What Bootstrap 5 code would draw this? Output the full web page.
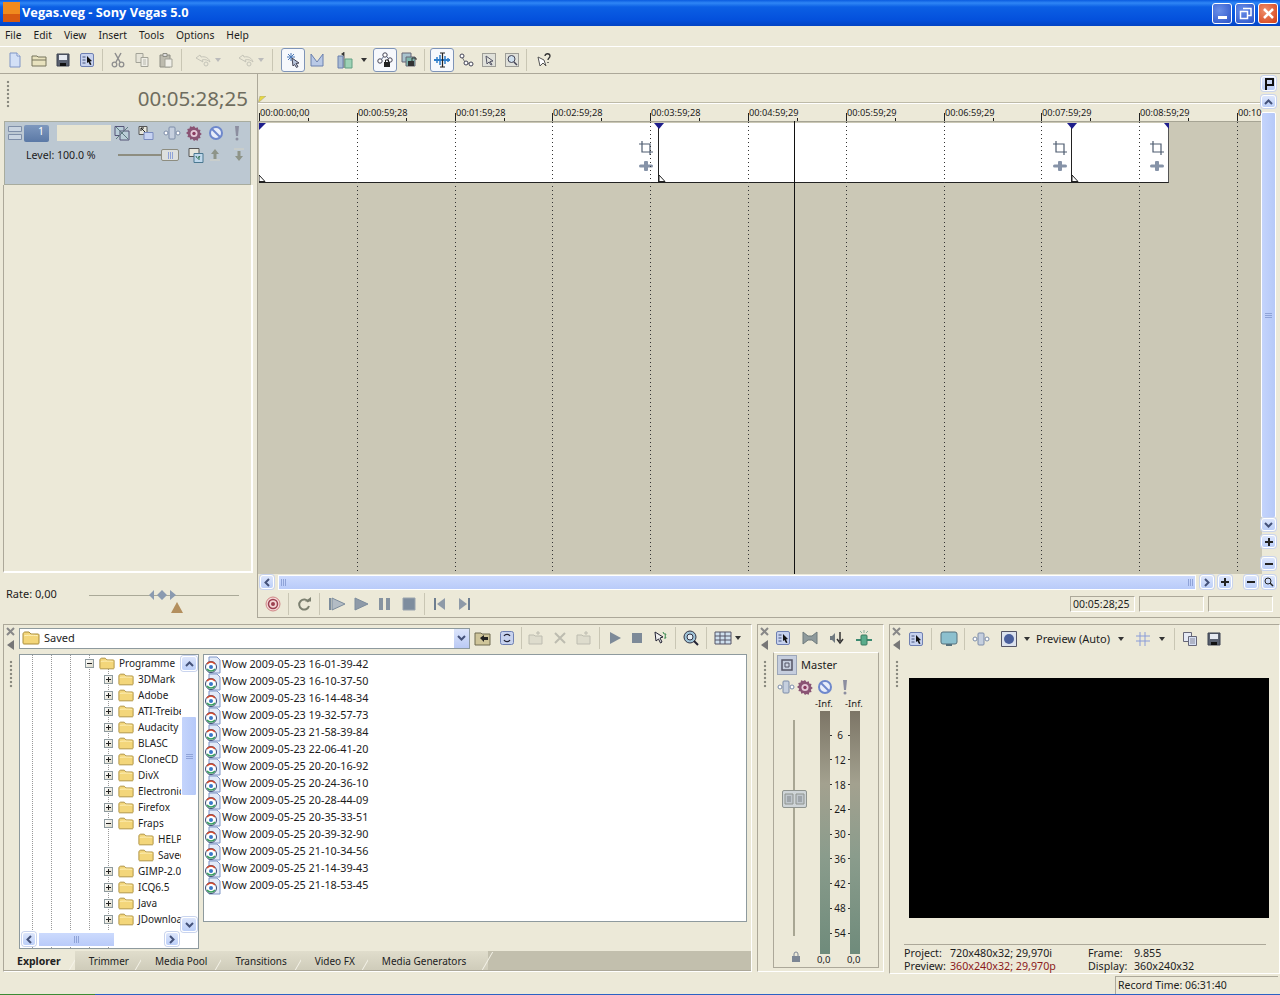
<!DOCTYPE html>
<html lang="en">
<head>
<meta charset="UTF-8">
<title>Vegas.veg - Sony Vegas 5.0</title>
<link href="https://cdn.jsdelivr.net/npm/bootstrap@5.3.0/dist/css/bootstrap.min.css" rel="stylesheet">
<style>
    html, body { margin: 0; width: 1280px; height: 995px; overflow: hidden; }
    body { background: #ECE9D8; color: #1c1c1c; font: 10.5px/1.2 "Noto Sans", "Liberation Sans", sans-serif; }
    svg { display: block; flex: none; }
    .ico { width: 16px; height: 16px; }
    .titlebar { height: 26px; padding: 0 2px 2px 3px; color: #fff; font: bold 12.8px "Open Sans", sans-serif;
        background: linear-gradient(#0A5BE0 0, #2F86F5 3px, #0B5FE4 7px, #0450DC 20px, #0344C4 26px); }
    .app-logo { margin-right: 2px; }
    .win-btn { width: 20px; height: 21px; border: 1px solid #fff; border-radius: 3px; background: radial-gradient(circle at 35% 35%, #6A8FE8, #2A53C8); }
    .win-close { background: radial-gradient(circle at 35% 35%, #F0906C, #D33C14); }
    .win-group { gap: 3px; margin-top: 2px; }
    .menubar { height: 21px; padding: 0 0 2px 5px; font-size: 10.3px; border-bottom: 1px solid #fff; }
    .menubar span { margin-right: 12px; }
    .toolbar { height: 27px; padding-left: 3px; border-bottom: 1px solid #ACA899; }
    .cell { width: 24px; height: 24px; display: flex; align-items: center; justify-content: center; flex: none; }
    .cell-on { background: #F6F8FC; border: 1px solid #7E94B8; border-radius: 3px; }
    .cell-22 { width: 22px; }
    .cell-23 { width: 23px; }
    .sep { width: 1px; height: 22px; background: #C9C6B4; margin: 0 3px; flex: none; }
    .drop { width: 0; height: 0; border: 3px solid transparent; border-top: 4px solid #333; border-bottom: 0; flex: none; }
    .drop-off { border-top-color: #bbb; }

    .main-area { height: 544px; }
    .left-col { width: 257px; flex: none; }
    .clock-row { height: 47px; padding: 6px 9px 0 6px; }
    .big-time { font: 20.5px "Noto Sans", sans-serif; color: #6F6D5F; margin-top: 4px; }
    .grip { width: 4px; height: 28px; background: radial-gradient(circle, #8b8b80 1.3px, transparent 1.6px) 0 0 / 4px 4px repeat-y; flex: none; }
    .track-head { margin: 0 6px 0 4px; height: 64px; background: #BCC8D2; border: 1px solid #A8AC9E; padding: 1px 0 0 3px; }
    .track-head .cell { height: 20px; }
    .level-row { margin-top: 2px; }
    .track-num { width: 25px; height: 17px; background: linear-gradient(#7E98BE, #5B79A6); border-radius: 2px; color: #fff; text-align: right; padding-right: 5px; margin: 0 8px 0 2px; }
    .track-name { width: 54px; height: 16px; background: #E8E5D2; margin-right: -1px; }
    .level-text { font-size: 10.6px; white-space: nowrap; flex: none; width: 74px; margin-left: 18px; }
    .level-line { width: 43px; height: 2px; background: #8d8d80; margin-left: 18px; flex: none; }
    .level-thumb { width: 18px; height: 12px; background: #DDE0DE; border: 1px solid #8d8d80; border-radius: 2px; flex: none; display: flex; align-items: center; justify-content: center; }
    .left-empty { height: 388px; border-right: 2px solid #fff; border-bottom: 2px solid #fff; border-left: 1px solid #ACA899; margin: 0 4px 0 3px; }
    .rate-row { height: 44px; padding-left: 6px; }
    .rate-slider { position: relative; width: 150px; height: 1px; background: #AAA998; margin-left: 32px; margin-top: 3px; }

    .time-canvas { position: relative; height: 500px; flex: none; border-left: 1px solid #ACA899; }
    .ruler { position: absolute; left: 0; right: 18px; top: 0; height: 48px; border-bottom: 1px solid #A6A494; overflow: hidden; }
    .ruler-in { position: absolute; left: 0; right: 0; top: 29px; height: 19px; border-top: 1px solid #fff; box-shadow: 0 -1px 0 #BDBAA8; }
    .tick { position: absolute; top: 34px; height: 13px; padding-left: 1px; font-size: 9.2px; white-space: nowrap; line-height: 10px; }
    .tick::before { content: ""; position: absolute; left: 0; bottom: 0; height: 8px; border-left: 1px solid #222; }
    .mini-tick { position: absolute; top: 44px; height: 3px; border-left: 1px solid #222; }
    .track-bed { position: absolute; left: 0; right: 18px; top: 48px; bottom: 0; background: #CBC8B6; }
    .clip { position: absolute; left: 1px; top: 1px; width: 910px; height: 60px; background: #fff; border-bottom: 1px solid #222; border-right: 1px solid #555; }
    .clip-cut { position: absolute; top: 0; bottom: 0; border-left: 1px solid #222; }
    .grid-line { position: absolute; top: 0; bottom: 0; width: 1px; background: repeating-linear-gradient(#333 0 1px, transparent 1px 4px); }
    .playhead { position: absolute; left: 536px; top: -1px; bottom: 0; border-left: 1px solid #111; }
    .on-clip { position: absolute; }
    .v-bar { position: absolute; right: 4px; top: 2px; bottom: 0; width: 15px; }
    .scroll-btn { background: linear-gradient(#DCE5FB, #BCCFF8); border: 1px solid #fff; border-radius: 3px; box-shadow: 0 0 0 1px #C9D4EE; display: flex; align-items: center; justify-content: center; flex: none; color: #44527A; }
    .v-thumb { background: linear-gradient(90deg, #C4D4FC, #B6C9F8); border: 1px solid #fff; border-radius: 2px; flex: 1; display: flex; align-items: center; justify-content: center; }
    .h-bar { height: 16px; padding: 0 4px 0 2px; border-left: 1px solid #ACA899; }
    .h-thumb { background: linear-gradient(#CCDAFD, #B9CBF9); border: 1px solid #fff; flex: 1; height: 15px; display: flex; align-items: center; justify-content: space-between; padding: 0 2px; }
    .grip-h { width: 5px; height: 7px; background: repeating-linear-gradient(90deg, #8FA3D8 0 1px, transparent 1px 2px); }
    .grip-v { width: 7px; height: 5px; background: repeating-linear-gradient(#8FA3D8 0 1px, transparent 1px 2px); }
    .pad-btn { width: 14px; height: 14px; }
    .transport { height: 28px; border-left: 1px solid #ACA899; border-bottom: 1px solid #ACA899; padding-left: 3px; }
    .tc-box { width: 65px; height: 16px; border: 1px solid #ACA899; border-bottom-color: #fff; border-right-color: #fff; margin-left: 4px; padding-left: 2px; line-height: 14px; }

    .bottom-area { height: 350px; margin-top: 6px; }
    .panel-box { border: 1px solid #ACA899; border-right-color: #fff; border-bottom-color: #fff; }
    .explorer { margin-left: 3px; width: 749px; height: 348px; position: relative; }
    .mixer { margin-left: 5px; width: 127px; height: 348px; }
    .preview { margin-left: 5px; width: 391px; height: 350px; }
    .side-rail { width: 15px; flex: none; padding: 2px 2px 0 0; align-items: center; }
    .combo { width: 451px; height: 21px; background: #fff; border: 1px solid #8E9A9E; padding-left: 2px; }
    .combo-drop { width: 15px; height: 19px; background: linear-gradient(#DCE5FB, #BAC9F4); }
    .tree { position: relative; width: 180px; height: 295px; background: #fff; border: 1px solid #8E9A9E; overflow: hidden; margin-top: 4px; }
    .tree-list { width: 161px; height: 277px; overflow: hidden; position: relative; }
    .tree-row { height: 16px; white-space: nowrap; display: flex; align-items: center; position: relative; font-size: 10px; }
    .expander { width: 9px; height: 9px; border: 1px solid #8E9A9E; background: linear-gradient(135deg, #fff, #DCD9C8); position: relative; flex: none; margin-right: 5px; }
    .expander::before { content: ""; position: absolute; left: 1px; right: 1px; top: 3px; height: 1px; background: #222; }
    .expander.plus::after { content: ""; position: absolute; top: 1px; bottom: 1px; left: 3px; width: 1px; background: #222; }
    .guide { position: absolute; top: 0; bottom: 0; width: 1px; background: repeating-linear-gradient(#999 0 1px, transparent 1px 2px); }
    .file-list { width: 544px; height: 268px; background: #fff; border: 1px solid #8E9A9E; margin-top: 4px; padding-top: 1px; }
    .file-row { height: 17px; display: flex; align-items: center; font-size: 10.8px; }
    .tab-band { position: absolute; left: 0; right: 0; bottom: 0; height: 20px; background: #C2BFAD; border-bottom: 1px solid #ACA899; }
    .app-tab { position: relative; height: 19px; padding: 0 14px; line-height: 20px; color: #222; font-size: 10px; background: linear-gradient(#E0DDCC, #CFCCBA); }
    .app-tab::after { content: ""; position: absolute; top: 1px; bottom: 0; right: 0; border-right: 1px solid #F6F4EA; transform: skewX(-30deg); }
    .app-tab.active { background: #ECE9D8; font-weight: 700; font-size: 10.5px; padding: 0 14px 0 13px; }
    .app-tab:nth-child(2) { padding-right: 12px; }
    .app-tab:nth-child(5) { padding-right: 13px; }
    .app-tab.tail { padding-right: 22px; }
    .mix-box { width: 106px; height: 316px; border: 1px solid #ACA899; border-top-color: #fff; position: relative; margin-top: 1px; padding: 2px 0 0 3px; }
    .master-btn { width: 20px; height: 20px; background: #C6CEDE; border: 1px solid #9CA6B8; display: flex; align-items: center; justify-content: center; }
    .meter { width: 10px; height: 243px; background: linear-gradient(#7C7566, #A3A18F 30%, #8A9C8C 60%, #6F8B7B); }
    .fader-line { position: absolute; left: 19px; top: 67px; width: 2px; height: 216px; background: #A8A693; }
    .fader-thumb { position: absolute; left: 8px; top: 137px; width: 25px; height: 18px; background: #CFD5D8; border: 1px solid #8F948F; border-radius: 2px; }
    .meter-wrap { position: absolute; left: 46px; top: 58px; width: 40px; height: 243px; }
    .scale-col { position: absolute; left: 10px; right: 10px; top: 18px; height: 210px; font-size: 10px; display: flex; flex-direction: column; justify-content: space-between; }
    .scale-col span { display: flex; align-items: center; justify-content: space-between; height: 12px; }
    .scale-col span::before, .scale-col span::after { content: ""; width: 2px; height: 1px; background: #333; }
    .mini-label { position: absolute; font-size: 9.5px; white-space: nowrap; }
    .video { width: 360px; height: 240px; background: #000; margin: 25px 0 0 4px; }
    .preview-info { margin: 26px 0 0 -1px; width: 362px; border-top: 1px solid #ACA899; padding-top: 2px; line-height: 13px; font-size: 10.7px; }
    .info-k { display: inline-block; width: 46px; }
    .status-row { height: 20px; }
    .record-box { width: 163px; height: 18px; margin: 2px 2px 0 auto; border: 1px solid #ACA899; border-right: 0; border-bottom: 0; padding: 2px 0 0 2px; font-size: 10.5px; }
    .os-edge { height: 1px; background: linear-gradient(90deg, #3B8A34 95px, #2B62C4 95px); }
</style>
</head>
<body>
<svg width="0" height="0" class="position-absolute">
    <symbol id="i-new" viewBox="0 0 16 16"><path d="M3 1h7l3 3v11H3z" fill="#D3E0F6" stroke="#7F95C6"/><path d="M10 1v3h3" fill="#fff" stroke="#7F95C6"/></symbol>
    <symbol id="i-open" viewBox="0 0 16 16"><path d="M1 4h5l1 1h8v9H1z" fill="#E8E2BE" stroke="#77745C"/><path d="M1 8h14" stroke="#77745C"/></symbol>
    <symbol id="i-save" viewBox="0 0 16 16"><path d="M2 2h12v12H2z" fill="#59606F" stroke="#3C4350"/><path d="M4 3h8v5H4z" fill="#E6EAF1"/><path d="M5 11h6v3H5z" fill="#111"/></symbol>
    <symbol id="i-props" viewBox="0 0 16 16"><rect x="1.500" y="1.500" width="13" height="13" rx="1.500" fill="#C7D2EE" stroke="#6F80B2"/><path d="M3.500 5h3M3.500 8h3M3.500 11h3" stroke="#45527A"/><path d="M8 4l5 5-2 .5 1.500 3-1.500.5-1.500-3L8 11z" fill="#111"/></symbol>
    <symbol id="i-cut" viewBox="0 0 16 16"><path d="M5 1l5 9M11 1L6 10" stroke="#8E8E8E" stroke-width="1.500" fill="none"/><circle cx="4.500" cy="12.500" r="2.300" fill="none" stroke="#8E8E8E" stroke-width="1.300"/><circle cx="11.500" cy="12.500" r="2.300" fill="none" stroke="#8E8E8E" stroke-width="1.300"/></symbol>
    <symbol id="i-copy" viewBox="0 0 16 16"><path d="M2 1.500h7v9H2z" fill="#E6E4D8" stroke="#A3A398"/><path d="M7 5.500h7v9H7z" fill="#EFEEE6" stroke="#A3A398"/><path d="M9 8h3M9 10h3M9 12h3" stroke="#B8B8AE"/></symbol>
    <symbol id="i-paste" viewBox="0 0 16 16"><path d="M2 3h10v12H2z" fill="#BDBBAE" stroke="#8E8E84"/><path d="M5 1.500h4v3H5z" fill="#DDD" stroke="#8E8E84"/><path d="M7 7h7v8H7z" fill="#F0EFE8" stroke="#A3A398"/></symbol>
    <symbol id="i-undo" viewBox="0 0 18 16"><path d="M2 6l4-3 1 2c4-1 8 1 9 5-2-2-5-3-8-2l1 2z" fill="none" stroke="#C5C4B8"/><circle cx="12" cy="12" r="2" fill="none" stroke="#C5C4B8"/></symbol>
    <symbol id="i-select" viewBox="0 0 16 16"><path d="M6 1v8M2 5h8M3 2l6 6M9 2L3 8" stroke="#4A78B8"/><path d="M7 6l7 5-3 .5 2 3-1.500 1-2-3L8 14z" fill="#B8C4DC" stroke="#445"/></symbol>
    <symbol id="i-env" viewBox="0 0 16 16"><path d="M2 2v12h12V2L8 10z" fill="#B9C9E6" stroke="#6A80AE"/></symbol>
    <symbol id="i-track" viewBox="0 0 18 18"><path d="M8 1v16" stroke="#555"/><path d="M2 5h5v12H2z" fill="#A8BBD4" stroke="#6A80AE"/><path d="M9 8h7v9H9z" fill="#9ED2B6" stroke="#62A083"/><path d="M5 3l3-2v4z" fill="#333"/></symbol>
    <symbol id="i-nodes" viewBox="0 0 18 18"><path d="M4 10l5-6 5 5" stroke="#5A6A8A" fill="none"/><circle cx="4" cy="10" r="2.200" fill="#fff" stroke="#445"/><circle cx="9" cy="4" r="2.200" fill="#fff" stroke="#445"/><circle cx="14" cy="9" r="2.200" fill="#fff" stroke="#445"/><path d="M8 11h6v5H8z" fill="#222"/><path d="M9.500 11V9h3v2" fill="none" stroke="#222"/></symbol>
    <symbol id="i-unlock" viewBox="0 0 18 18"><path d="M2 2h9v9H2z" fill="#A9C4CE" stroke="#667"/><path d="M6 6h9v9H6z" fill="#7FB6AC" stroke="#667"/><path d="M8 10h6v5H8z" fill="#333"/><path d="M12 10V7h4v2" stroke="#333" fill="none"/></symbol>
    <symbol id="i-ripple" viewBox="0 0 18 18"><path d="M1 9h16" stroke="#2D7CC9" stroke-width="2"/><path d="M4 6v6M7 4v10M12 5v8M15 7v4" stroke="#2D7CC9" stroke-width="1.500"/><path d="M9.500 2v14M7 2h5M7 16h5" stroke="#222" stroke-width="1.200"/></symbol>
    <symbol id="i-curve" viewBox="0 0 16 16"><path d="M4 5l4 7 4-1" stroke="#777" fill="none"/><circle cx="4" cy="4" r="2" fill="#fff" stroke="#445"/><circle cx="8" cy="11" r="2" fill="#fff" stroke="#445"/><circle cx="13" cy="12" r="2" fill="#fff" stroke="#445"/></symbol>
    <symbol id="i-selbox" viewBox="0 0 16 16"><path d="M1.500 1.500h13v13h-13z" fill="#E0E1DA" stroke="#555" stroke-dasharray="1 1"/><path d="M5 4l7 5-3 .5 2 3-1 .5-2-3-2 2z" fill="none" stroke="#556"/></symbol>
    <symbol id="i-zoombox" viewBox="0 0 16 16"><path d="M1.500 1.500h13v13h-13z" fill="#E0E1DA" stroke="#555" stroke-dasharray="1 1"/><circle cx="7.500" cy="7" r="3.500" fill="#CFE0EE" stroke="#445"/><path d="M10 10l3 3" stroke="#445" stroke-width="1.500"/></symbol>
    <symbol id="i-help" viewBox="0 0 16 16"><path d="M2 5l6 3 2 6-3-3-3 3z" fill="#fff" stroke="#555"/><path d="M9 4c0-3 5-3 5 0 0 2-2 2-2 4M12 10v1" stroke="#333" fill="none" stroke-width="1.300"/></symbol>
    <symbol id="i-crop" viewBox="0 0 14 14"><path d="M3 0v11h11M0 3h11v11" fill="none" stroke="#4E5C70" stroke-width="1.200"/></symbol>
    <symbol id="i-pan" viewBox="0 0 14 14"><rect x="5" y="2" width="4" height="10" rx="1" fill="#8693A8"/><rect x="0" y="5.500" width="14" height="3" rx="1.500" fill="#8693A8"/></symbol>
    <symbol id="i-chip" viewBox="0 0 18 16"><path d="M1 8h4M13 8h4" stroke="#7C8CA8" stroke-width="2"/><rect x="6" y="2" width="6" height="12" rx="1" fill="#C5CFDE" stroke="#7C8CA8"/><circle cx="3" cy="8" r="2" fill="#fff" stroke="#7C8CA8"/><circle cx="15" cy="8" r="2" fill="#fff" stroke="#7C8CA8"/></symbol>
    <symbol id="i-fx" viewBox="0 0 16 16"><path d="M8 1l1.500 2 2.300-.8.4 2.400 2.400.4-.8 2.300 2 1.700-2 1.700.8 2.300-2.400.4-.4 2.400-2.300-.8L8 16l-1.500-2-2.300.8-.4-2.400-2.400-.4.8-2.300L0 8l2-1.700-.8-2.300 2.400-.4.4-2.400 2.300.8z" fill="#8A5474"/><circle cx="8" cy="8.500" r="3.500" fill="#E5C9D8"/><circle cx="8" cy="8.500" r="1.700" fill="#8A3A60"/></symbol>
    <symbol id="i-mute" viewBox="0 0 16 16"><circle cx="8" cy="8" r="6" fill="#E8EDFA" stroke="#6E88CC" stroke-width="2"/><path d="M4 4l8 8" stroke="#6E88CC" stroke-width="2"/></symbol>
    <symbol id="i-solo" viewBox="0 0 16 16"><path d="M6 1h4l-1 10H7z" fill="#8C8EA0"/><circle cx="8" cy="14" r="1.500" fill="#8C8EA0"/></symbol>
    <symbol id="i-comp" viewBox="0 0 16 16"><path d="M1 1.500h10v8H1z" fill="#E6E6DC" stroke="#555"/><path d="M6 6.500h9v9H6z" fill="#BFD8EC" stroke="#4A7890"/><path d="M8 9c1 3 2 3 4 0M11 9v4" stroke="#2E7050" fill="none"/></symbol>
    <symbol id="i-compoff" viewBox="0 0 16 16"><path d="M1 1.500h9v9H1z" fill="#B9CDD8" stroke="#557"/><path d="M6 6h9v9H6z" fill="#B9CDD8" stroke="#557"/><path d="M2 2l12 12M14 2L2 14" stroke="#5F7A80"/></symbol>
    <symbol id="i-parent" viewBox="0 0 16 16"><path d="M1 1.500h8v8H1z" fill="#E6E6DC" stroke="#555"/><path d="M6 7.500h9v7H6z" fill="#C7D3F2" stroke="#7A8CC0"/><path d="M3 3l4 4M3 6V3h3" stroke="#222" fill="none"/></symbol>
    <symbol id="i-up" viewBox="0 0 14 14"><path d="M7 1L3 6h2.500v5h3V6H11z" fill="#8E9488"/><path d="M2 12h10" stroke="#D5D3C5"/></symbol>
    <symbol id="i-down" viewBox="0 0 14 14"><path d="M7 13l4-5H8.500V3h-3v5H3z" fill="#8E9488"/><path d="M2 1h10" stroke="#D5D3C5"/></symbol>
    <symbol id="i-flag" viewBox="0 0 14 14"><path d="M3 1h9v8H5v4H3z" fill="#111"/><path d="M5 3h5v4H5z" fill="#C9D6F4"/></symbol>
    <symbol id="i-rec" viewBox="0 0 16 16"><circle cx="8" cy="8" r="7" fill="#F4D6D6" stroke="#D08686"/><circle cx="8" cy="8" r="4.500" fill="none" stroke="#9B4050" stroke-width="1.500"/><circle cx="8" cy="8" r="2" fill="#9B4050"/></symbol>
    <symbol id="i-loop" viewBox="0 0 16 16"><path d="M12.500 6A5 5 0 1 0 13 10" fill="none" stroke="#7C8070" stroke-width="2"/><path d="M9 5.500h6V1z" fill="#7C8070"/></symbol>
    <symbol id="i-playstart" viewBox="0 0 18 16"><path d="M2 2v12" stroke="#7C8C9C" stroke-width="2"/><path d="M4 2l13 6-13 6z" fill="#B3BCC4" stroke="#7C8C9C"/></symbol>
    <symbol id="i-play" viewBox="0 0 16 16"><path d="M2 2l13 6-13 6z" fill="#8E9AA8" stroke="#7C8C9C"/></symbol>
    <symbol id="i-pause" viewBox="0 0 16 16"><path d="M2 2h4v12H2zM9 2h4v12H9z" fill="#8693A0"/></symbol>
    <symbol id="i-stop" viewBox="0 0 16 16"><path d="M2 2h12v12H2z" fill="#7E8D9E" stroke="#9AA4AE"/></symbol>
    <symbol id="i-prev" viewBox="0 0 16 16"><path d="M3 2v12" stroke="#6E7E90" stroke-width="2"/><path d="M13 2L5 8l8 6z" fill="#8E9AA8"/></symbol>
    <symbol id="i-next" viewBox="0 0 16 16"><path d="M13 2v12" stroke="#6E7E90" stroke-width="2"/><path d="M3 2l8 6-8 6z" fill="#8E9AA8"/></symbol>
    <symbol id="i-folder" viewBox="0 0 18 16"><path d="M1 4c0-1 1-2 2-2h4l2 2h7c1 0 1 1 1 1v8c0 1-1 1-1 1H2s-1 0-1-1z" fill="#F3D67A" stroke="#A98C3A"/><path d="M2 6c0-1 14-1 14 0" stroke="#FFF3C0" fill="none"/></symbol>
    <symbol id="i-media" viewBox="0 0 18 18"><path d="M5 1h8l3 3v13H5z" fill="#E2EAF8" stroke="#7F95C6"/><circle cx="7" cy="11" r="5.500" fill="#fff" stroke="#3A4A70"/><path d="M3 8a5 5 0 0 1 8 0" fill="none" stroke="#D04A30" stroke-width="1.500"/><path d="M11 13a5 5 0 0 1-8 0" fill="none" stroke="#3AA060" stroke-width="1.500"/><circle cx="7" cy="11" r="2" fill="#3A78C8"/></symbol>
    <symbol id="i-folderup" viewBox="0 0 18 16"><path d="M1 3h6l1 1h8v11H1z" fill="#CFC59A" stroke="#6F6B50"/><path d="M6 8l4-3v2h4v3h-4v2z" fill="#222"/></symbol>
    <symbol id="i-refresh" viewBox="0 0 16 16"><rect x="1.500" y="1.500" width="13" height="13" rx="2" fill="#C7D2EE" stroke="#6F80B2"/><path d="M11 6a3.500 3.500 0 0 0-6 0M5 10a3.500 3.500 0 0 0 6 0" stroke="#223" fill="none" stroke-width="1.300"/></symbol>
    <symbol id="i-newfold" viewBox="0 0 16 16"><path d="M1 5h5l1 1h7v8H1z" fill="#DEDCCD" stroke="#BDBCB0"/><path d="M10 1v4M8 3h4" stroke="#BDBCB0"/></symbol>
    <symbol id="i-del" viewBox="0 0 16 16"><path d="M3 3l10 10M13 3L3 13" stroke="#BDBCB0" stroke-width="2"/></symbol>
    <symbol id="i-playsm" viewBox="0 0 14 14"><path d="M2 1l11 6-11 6z" fill="#7D8A98"/></symbol>
    <symbol id="i-stopsm" viewBox="0 0 14 14"><path d="M2 2h10v10H2z" fill="#7D8A98"/></symbol>
    <symbol id="i-auto" viewBox="0 0 16 16"><path d="M3 2l8 5-3 1 2 4-1.500 1-2-4L4 11z" fill="#eee" stroke="#223"/><path d="M11 2l1 2 2 0-1 2 1 2h-2" stroke="#3A8A50" fill="none"/></symbol>
    <symbol id="i-globe" viewBox="0 0 18 18"><circle cx="8" cy="8" r="6" fill="#9FC4D8" stroke="#334"/><circle cx="8" cy="8" r="3" fill="#E6F0F6" stroke="#334"/><path d="M12 12l4 4" stroke="#223" stroke-width="2"/></symbol>
    <symbol id="i-views" viewBox="0 0 18 16"><path d="M1 2h16v12H1z" fill="#CFE0EE" stroke="#556"/><path d="M1 6h16M1 10h16M6 2v12M11 2v12" stroke="#556"/></symbol>
    <symbol id="i-narrow" viewBox="0 0 16 16"><path d="M1 2l5 4h4l5-4v12l-5-4H6l-5 4z" fill="#8E9A9C" stroke="#6E7A7C"/></symbol>
    <symbol id="i-spkdown" viewBox="0 0 16 16"><path d="M1 6h2l3-3v10l-3-3H1z" fill="#707A80"/><path d="M11 2v9M8 9l3 4 3-4" stroke="#333" stroke-width="1.500" fill="none"/></symbol>
    <symbol id="i-mixbus" viewBox="0 0 18 18"><path d="M1 11h16" stroke="#3A8A70" stroke-width="2"/><rect x="6" y="6" width="6" height="10" rx="1" fill="#5AAC8C" stroke="#3A7A60"/><path d="M9 1v3M5 2l2 2M13 2l-2 2" stroke="#8AAE9C"/></symbol>
    <symbol id="i-master" viewBox="0 0 12 12"><path d="M1 1h10v10H1z" fill="none" stroke="#556" stroke-width="1.500"/><path d="M4 4h4v4H4z" fill="#CFD6E4" stroke="#556"/></symbol>
    <symbol id="i-lock" viewBox="0 0 12 12"><path d="M2 5h8v6H2z" fill="#7C8694"/><path d="M4 5V3a2 2 0 0 1 4 0v2" fill="none" stroke="#7C8694"/></symbol>
    <symbol id="i-monitor" viewBox="0 0 18 18"><rect x="1" y="2" width="16" height="12" rx="2" fill="#8CC0CE" stroke="#55707C"/><path d="M6 15h6" stroke="#55707C" stroke-width="2"/></symbol>
    <symbol id="i-circ" viewBox="0 0 16 16"><path d="M.5.500h15v15H.5z" fill="#DCE2EE" stroke="#556"/><circle cx="8" cy="8" r="5" fill="#4A5F9C"/></symbol>
    <symbol id="i-grid" viewBox="0 0 16 16"><path d="M1 5h14M1 10h14M5 1v14M10 1v14" stroke="#8A9CD8"/></symbol>
    <symbol id="i-dup" viewBox="0 0 16 16"><path d="M1.500 1.500h8v9h-8z" fill="#E6EAF4" stroke="#667"/><path d="M6.500 5.500h8v9h-8z" fill="#D6E0F4" stroke="#667"/><path d="M8 8h5M8 10h5M8 12h5" stroke="#889"/></symbol>
</svg>

<header class="titlebar d-flex align-items-center">
    <svg width="17" height="20" class="app-logo"><rect width="17" height="20" fill="#F08A1E"/><rect y="12" width="17" height="8" fill="#D85A10"/></svg>
    <span class="flex-grow-1">Vegas.veg - Sony Vegas 5.0</span>
    <div class="d-flex win-group">
        <div class="win-btn d-flex align-items-end justify-content-center pb-1"><svg width="9" height="3"><rect width="9" height="3" fill="#fff"/></svg></div>
        <div class="win-btn d-flex align-items-center justify-content-center"><svg width="13" height="13"><path d="M4 1.500h8v7H9M1.500 4.500h7v7h-7z" fill="none" stroke="#fff" stroke-width="1.500"/></svg></div>
        <div class="win-btn win-close d-flex align-items-center justify-content-center"><svg width="13" height="13"><path d="M2 2l9 9M11 2l-9 9" stroke="#fff" stroke-width="2.500"/></svg></div>
    </div>
</header>

<nav class="menubar d-flex align-items-center">
    <span>File</span><span>Edit</span><span>View</span><span>Insert</span><span>Tools</span><span>Options</span><span>Help</span>
</nav>

<div class="toolbar d-flex align-items-center">
    <div class="cell"><svg class="ico"><use href="#i-new"/></svg></div>
    <div class="cell"><svg class="ico"><use href="#i-open"/></svg></div>
    <div class="cell"><svg class="ico"><use href="#i-save"/></svg></div>
    <div class="cell"><svg class="ico"><use href="#i-props"/></svg></div>
    <div class="sep"></div>
    <div class="cell"><svg class="ico"><use href="#i-cut"/></svg></div>
    <div class="cell"><svg class="ico"><use href="#i-copy"/></svg></div>
    <div class="cell"><svg class="ico"><use href="#i-paste"/></svg></div>
    <div class="sep"></div>
    <div class="cell" style="margin-left:6px"><svg width="18" height="16"><use href="#i-undo"/></svg></div>
    <div class="drop drop-off" style="margin-right:13px"></div>
    <div class="cell"><svg width="18" height="16"><use href="#i-undo"/></svg></div>
    <div class="drop drop-off"></div>
    <div class="sep ms-2"></div>
    <div class="cell cell-on" style="margin-left:5px"><svg class="ico"><use href="#i-select"/></svg></div>
    <div class="cell"><svg class="ico"><use href="#i-env"/></svg></div>
    <div class="cell ms-1"><svg width="18" height="18"><use href="#i-track"/></svg></div>
    <div class="drop ms-1"></div>
    <div class="cell cell-on" style="margin-left:6px"><svg width="18" height="18"><use href="#i-nodes"/></svg></div>
    <div class="cell"><svg width="18" height="18"><use href="#i-unlock"/></svg></div>
    <div class="sep" style="margin-right:5px"></div>
    <div class="cell cell-on"><svg width="18" height="18"><use href="#i-ripple"/></svg></div>
    <div class="cell cell-23"><svg class="ico"><use href="#i-curve"/></svg></div>
    <div class="cell cell-23"><svg class="ico"><use href="#i-selbox"/></svg></div>
    <div class="cell cell-23"><svg class="ico"><use href="#i-zoombox"/></svg></div>
    <div class="sep"></div>
    <div class="cell" style="margin-left:2px"><svg class="ico"><use href="#i-help"/></svg></div>
</div>

<section class="main-area d-flex">
    <div class="left-col">
        <div class="clock-row d-flex justify-content-between">
            <div class="grip"></div>
            <div class="big-time">00:05:28;25</div>
        </div>
        <div class="track-head">
            <div class="d-flex align-items-center">
                <svg width="14" height="16"><path d="M.5 1.500h13v5H.5zM.5 9.500h13v5H.5z" fill="#C9D4E0" stroke="#7F8FA8"/></svg>
                <div class="track-num">1</div>
                <div class="track-name"></div>
                <div class="cell"><svg class="ico"><use href="#i-compoff"/></svg></div>
                <div class="cell"><svg class="ico"><use href="#i-parent"/></svg></div>
                <div class="cell" style="margin-left:2px"><svg width="18" height="16"><use href="#i-chip"/></svg></div>
                <div class="cell" style="width:20px"><svg class="ico"><use href="#i-fx"/></svg></div>
                <div class="cell"><svg class="ico"><use href="#i-mute"/></svg></div>
                <div class="cell" style="width:18px"><svg class="ico"><use href="#i-solo"/></svg></div>
            </div>
            <div class="level-row d-flex align-items-center">
                <span class="level-text">Level: 100.0 %</span>
                <div class="level-line"></div>
                <div class="level-thumb"><div class="grip-h"></div></div>
                <div class="cell" style="margin-left:6px;width:22px"><svg class="ico"><use href="#i-comp"/></svg></div>
                <div class="cell" style="width:16px"><svg width="14" height="14"><use href="#i-up"/></svg></div>
                <div class="cell ms-1"><svg width="14" height="14"><use href="#i-down"/></svg></div>
            </div>
        </div>
        <div class="left-empty"></div>
        <div class="rate-row d-flex align-items-center">
            <span style="font-size:11px;margin-top:-2px">Rate: 0,00</span>
            <div class="rate-slider" style="margin-bottom:2px">
                <svg width="28" height="12" class="position-absolute" style="left:60px;top:-6px"><path d="M0 6l5-5v10zM8 6l5-5 5 5-5 5zM21 1l6 5-6 5z" fill="#8A9AB0"/></svg>
                <svg width="12" height="11" class="position-absolute" style="left:82px;top:7px"><path d="M6 0l6 11H0z" fill="#B38F5E"/></svg>
            </div>
        </div>
    </div>

    <div class="flex-grow-1 d-flex flex-column">
        <div class="time-canvas" id="timeCanvas">
            <svg width="9" height="7" class="position-absolute" style="left:0;top:22px"><path d="M0 7l8-7H2L0 7z" fill="#E8D840" stroke="#999" stroke-width=".5"/></svg>
            <div class="ruler" id="ruler"><div class="ruler-in"></div></div>
            <div class="track-bed" id="bed">
                <div class="clip" id="clip"></div>
                <div class="playhead"></div>
            </div>
            <div class="v-bar d-flex flex-column">
                <div class="scroll-btn" style="height:15px"><svg width="14" height="14"><use href="#i-flag"/></svg></div>
                <div class="scroll-btn mt-1" style="height:13px"><svg width="9" height="6"><path d="M1 5l3.500-3.500L8 5" fill="none" stroke="#44527A" stroke-width="2"/></svg></div>
                <div class="v-thumb mt-1"><div class="grip-v"></div></div>
                <div class="scroll-btn" style="height:13px"><svg width="9" height="6"><path d="M1 1l3.500 3.500L8 1" fill="none" stroke="#44527A" stroke-width="2"/></svg></div>
                <div class="scroll-btn" style="height:13px;margin-top:4px"><svg width="8" height="8"><path d="M4 0v8M0 4h8" stroke="#222" stroke-width="2"/></svg></div>
                <div class="scroll-btn" style="height:13px;margin:9px 0 4px"><svg width="8" height="8"><path d="M0 4h8" stroke="#222" stroke-width="2"/></svg></div>
            </div>
        </div>
        <div class="h-bar d-flex align-items-center gap-1">
            <div class="scroll-btn pad-btn"><svg width="6" height="9"><path d="M5 1L1.500 4.500 5 8" fill="none" stroke="#44527A" stroke-width="2"/></svg></div>
            <div class="h-thumb"><div class="grip-h"></div><div class="grip-h"></div></div>
            <div class="scroll-btn pad-btn"><svg width="6" height="9"><path d="M1 1l3.500 3.500L1 8" fill="none" stroke="#44527A" stroke-width="2"/></svg></div>
            <div class="scroll-btn pad-btn"><svg width="8" height="8"><path d="M4 0v8M0 4h8" stroke="#222" stroke-width="2"/></svg></div>
            <div class="scroll-btn pad-btn ms-2"><svg width="8" height="8"><path d="M0 4h8" stroke="#222" stroke-width="2"/></svg></div>
            <div class="scroll-btn pad-btn"><svg width="10" height="10"><circle cx="4" cy="4" r="3" fill="none" stroke="#222"/><path d="M6 6l3 3" stroke="#222" stroke-width="1.500"/></svg></div>
        </div>
        <div class="transport d-flex align-items-center">
            <div class="cell"><svg class="ico"><use href="#i-rec"/></svg></div>
            <div class="sep"></div>
            <div class="cell"><svg class="ico"><use href="#i-loop"/></svg></div>
            <div class="sep" style="margin-right:5px"></div>
            <div class="cell"><svg width="18" height="16"><use href="#i-playstart"/></svg></div>
            <div class="cell"><svg class="ico"><use href="#i-play"/></svg></div>
            <div class="cell"><svg class="ico"><use href="#i-pause"/></svg></div>
            <div class="cell"><svg class="ico"><use href="#i-stop"/></svg></div>
            <div class="sep"></div>
            <div class="cell"><svg class="ico"><use href="#i-prev"/></svg></div>
            <div class="cell"><svg class="ico"><use href="#i-next"/></svg></div>
            <div class="tc-box" style="margin-left:auto">00:05:28;25</div>
            <div class="tc-box"></div>
            <div class="tc-box" style="margin-right:7px"></div>
        </div>
    </div>
</section>

<section class="bottom-area d-flex align-items-start">
    <div class="explorer panel-box d-flex">
        <div class="side-rail d-flex flex-column">
            <svg width="9" height="9"><path d="M1 1l7 7M8 1L1 8" stroke="#888" stroke-width="2"/></svg>
            <svg width="7" height="10" class="mt-1"><path d="M7 0v10L0 5z" fill="#777"/></svg>
            <div class="grip" style="margin-top:10px"></div>
        </div>
        <div class="flex-grow-1">
            <div class="d-flex align-items-center" style="padding-top:1px">
                <div class="combo d-flex align-items-center">
                    <svg width="18" height="16"><use href="#i-folder"/></svg>
                    <span class="ms-1 flex-grow-1" style="font-size:11px">Saved</span>
                    <div class="combo-drop d-flex align-items-center justify-content-center"><svg width="9" height="6"><path d="M1 1l3.500 3.500L8 1" fill="none" stroke="#44527A" stroke-width="2"/></svg></div>
                </div>
                <div class="cell" style="margin-left:1px"><svg width="18" height="16"><use href="#i-folderup"/></svg></div>
                <div class="cell"><svg class="ico"><use href="#i-refresh"/></svg></div>
                <div class="sep" style="margin:0 2px"></div>
                <div class="cell"><svg class="ico"><use href="#i-newfold"/></svg></div>
                <div class="cell"><svg class="ico"><use href="#i-del"/></svg></div>
                <div class="cell"><svg class="ico"><use href="#i-newfold"/></svg></div>
                <div class="sep" style="margin-right:4px"></div>
                <div class="cell cell-22"><svg width="14" height="14"><use href="#i-playsm"/></svg></div>
                <div class="cell cell-22"><svg width="14" height="14"><use href="#i-stopsm"/></svg></div>
                <div class="cell"><svg class="ico"><use href="#i-auto"/></svg></div>
                <div class="sep"></div>
                <div class="cell"><svg width="18" height="18"><use href="#i-globe"/></svg></div>
                <div class="sep"></div>
                <div class="cell" style="margin-left:1px"><svg width="18" height="16"><use href="#i-views"/></svg></div>
                <div class="drop"></div>
            </div>
            <div class="d-flex">
                <div class="tree">
                    <div class="guide" style="left:12px"></div>
                    <div class="guide" style="left:31px"></div>
                    <div class="guide" style="left:50px"></div>
                    <div class="guide" style="left:69px"></div>
                    <div class="guide" style="left:88px;top:14px"></div>
                    <div class="tree-list" id="treeList"></div>
                    <div class="position-absolute d-flex flex-column" style="left:161px;top:1px;width:16px;height:276px">
                        <div class="scroll-btn" style="height:15px"><svg width="9" height="6"><path d="M1 5l3.500-3.500L8 5" fill="none" stroke="#44527A" stroke-width="2"/></svg></div>
                        <div class="v-thumb" style="flex:none;height:80px;margin-top:45px"><div class="grip-v"></div></div>
                        <div class="scroll-btn" style="height:15px;margin-top:auto"><svg width="9" height="6"><path d="M1 1l3.500 3.500L8 1" fill="none" stroke="#44527A" stroke-width="2"/></svg></div>
                    </div>
                    <div class="position-absolute d-flex align-items-center" style="left:2px;bottom:1px;width:157px;height:16px;background:#fff">
                        <div class="scroll-btn pad-btn"><svg width="6" height="9"><path d="M5 1L1.500 4.500 5 8" fill="none" stroke="#44527A" stroke-width="2"/></svg></div>
                        <div class="h-thumb justify-content-center" style="flex:none;width:77px;margin-left:2px"><div class="grip-h"></div></div>
                        <div class="scroll-btn pad-btn ms-auto"><svg width="6" height="9"><path d="M1 1l3.500 3.500L1 8" fill="none" stroke="#44527A" stroke-width="2"/></svg></div>
                    </div>
                </div>
                <div class="file-list ms-1" id="fileList"></div>
            </div>
        </div>
        <div class="tab-band nav" id="tabBand"></div>
    </div>

    <div class="mixer panel-box d-flex">
        <div class="side-rail d-flex flex-column">
            <svg width="9" height="9"><path d="M1 1l7 7M8 1L1 8" stroke="#888" stroke-width="2"/></svg>
            <svg width="7" height="10" class="mt-1"><path d="M7 0v10L0 5z" fill="#777"/></svg>
            <div class="grip" style="margin-top:10px"></div>
        </div>
        <div>
            <div class="d-flex align-items-center" style="height:26px;margin-left:-4px">
                <div class="cell" style="width:27px"><svg class="ico"><use href="#i-props"/></svg></div>
                <div class="cell" style="width:27px"><svg class="ico"><use href="#i-narrow"/></svg></div>
                <div class="cell" style="width:27px"><svg class="ico"><use href="#i-spkdown"/></svg></div>
                <div class="cell" style="width:27px"><svg width="18" height="18"><use href="#i-mixbus"/></svg></div>
            </div>
            <div class="mix-box">
                <div class="d-flex align-items-center gap-1"><div class="master-btn"><svg width="12" height="12"><use href="#i-master"/></svg></div><span style="font-size:11px">Master</span></div>
                <div class="d-flex align-items-center mt-1">
                    <svg width="18" height="16"><use href="#i-chip"/></svg>
                    <svg class="ico" style="margin-left:2px"><use href="#i-fx"/></svg>
                    <svg class="ico" style="margin-left:4px"><use href="#i-mute"/></svg>
                    <svg class="ico" style="margin-left:4px"><use href="#i-solo"/></svg>
                </div>
                <div class="fader-line"></div>
                <div class="fader-thumb d-flex align-items-center justify-content-center"><svg width="21" height="12"><path d="M1 1h8v10H1zM12 1h8v10h-8z" fill="#BFC6CC" stroke="#8F948F"/><path d="M3 4h4M3 6h4M3 8h4M14 4h4M14 6h4M14 8h4" stroke="#7F8488"/></svg></div>
                <svg width="12" height="12" class="position-absolute" style="left:16px;top:298px"><use href="#i-lock"/></svg>
                <span class="mini-label" style="left:41px;top:45px">-Inf.</span>
                <span class="mini-label" style="left:71px;top:45px">-Inf.</span>
                <div class="meter-wrap d-flex justify-content-between">
                    <div class="meter"></div>
                    <div class="scale-col" id="scaleCol"></div>
                    <div class="meter"></div>
                </div>
                <span class="mini-label" style="left:43px;top:301px">0,0</span>
                <span class="mini-label" style="left:73px;top:301px">0,0</span>
            </div>
        </div>
    </div>

    <div class="preview panel-box d-flex">
        <div class="side-rail d-flex flex-column">
            <svg width="9" height="9"><path d="M1 1l7 7M8 1L1 8" stroke="#888" stroke-width="2"/></svg>
            <svg width="7" height="10" class="mt-1"><path d="M7 0v10L0 5z" fill="#777"/></svg>
            <div class="grip" style="margin-top:10px"></div>
        </div>
        <div>
            <div class="d-flex align-items-center" style="height:28px">
                <div class="cell" style="margin-left:-1px"><svg class="ico"><use href="#i-props"/></svg></div>
                <div class="sep"></div>
                <div class="cell" style="margin-left:2px"><svg width="18" height="18"><use href="#i-monitor"/></svg></div>
                <div class="sep"></div>
                <div class="cell" style="margin-left:1px"><svg width="18" height="16"><use href="#i-chip"/></svg></div>
                <div class="cell ms-1"><svg class="ico"><use href="#i-circ"/></svg></div>
                <div class="drop" style="margin-left:3px"></div>
                <span style="font-size:11px;margin-left:6px">Preview (Auto)</span>
                <div class="drop" style="margin-left:8px"></div>
                <div class="cell" style="margin:0 4px 0 7px"><svg class="ico"><use href="#i-grid"/></svg></div>
                <div class="drop"></div>
                <div class="sep" style="margin:0 3px 0 9px"></div>
                <div class="cell"><svg class="ico"><use href="#i-dup"/></svg></div>
                <div class="cell"><svg class="ico"><use href="#i-save"/></svg></div>
            </div>
            <div class="video"></div>
            <div class="preview-info d-flex">
                <div style="width:184px">
                    <div><span class="info-k">Project:</span>720x480x32; 29,970i</div>
                    <div><span class="info-k">Preview:</span><span style="color:#8B1A1A">360x240x32; 29,970p</span></div>
                </div>
                <div>
                    <div><span class="info-k">Frame:</span>9.855</div>
                    <div><span class="info-k">Display:</span>360x240x32</div>
                </div>
            </div>
        </div>
    </div>
</section>

<footer class="status-row d-flex"><div class="record-box">Record Time: 06:31:40</div></footer>
<div class="os-edge"></div>

<script>
    const ruler = document.getElementById("ruler");
    const bed = document.getElementById("bed");
    const clip = document.getElementById("clip");
    const marks = ["00:00:00;00", "00:00:59;28", "00:01:59;28", "00:02:59;28", "00:03:59;28", "00:04:59;29",
        "00:05:59;29", "00:06:59;29", "00:07:59;29", "00:08:59;29", "00:10:00;00"];
    const step = 97.8;

    marks.forEach((label, i) => {
        const x = Math.round(i * step) + 1;
        const tick = document.createElement("div");
        tick.className = "tick";
        tick.style.left = x + "px";
        tick.textContent = label;
        ruler.appendChild(tick);

        const mini = document.createElement("div");
        mini.className = "mini-tick";
        mini.style.left = (x + 49) + "px";
        ruler.appendChild(mini);

        if (i > 0) {
            const line = document.createElement("div");
            line.className = "grid-line";
            line.style.left = x + "px";
            bed.appendChild(line);
        }
    });

    [399, 812].forEach(x => {
        const cut = document.createElement("div");
        cut.className = "clip-cut";
        cut.style.left = x + "px";
        clip.appendChild(cut);
    });

    [380, 794, 891].forEach(x => {
        clip.insertAdjacentHTML("beforeend",
            `<svg width="14" height="14" class="on-clip" style="left:${x}px;top:18px"><use href="#i-crop"/></svg>
             <svg width="14" height="14" class="on-clip" style="left:${x}px;top:36px"><use href="#i-pan"/></svg>`);
    });

    // fade handles on the clip corners
    [0, 400, 813].forEach(x => {
        clip.insertAdjacentHTML("beforeend",
            `<svg width="7" height="7" class="on-clip" style="left:${x}px;bottom:0"><path d="M0 0l6 6.500H0z" fill="#fff" stroke="#222"/></svg>`);
    });
    [[0, "M0 0h7L0 7z"], [395, "M0 0h10L5 6z"], [808, "M0 0h10L5 6z"], [905, "M0 0h5v6z"]].forEach(([x, d]) => {
        clip.insertAdjacentHTML("beforeend",
            `<svg width="10" height="7" class="on-clip" style="left:${x}px;top:0"><path d="${d}" fill="#1E1E8C"/></svg>`);
    });

    const tree = [
        [3, "minus", "Programme"], [4, "plus", "3DMark"], [4, "plus", "Adobe"], [4, "plus", "ATI-Treiber"],
        [4, "plus", "Audacity"], [4, "plus", "BLASC"], [4, "plus", "CloneCD"], [4, "plus", "DivX"],
        [4, "plus", "Electronic Arts"], [4, "plus", "Firefox"], [4, "minus", "Fraps"], [5, "", "HELP"],
        [5, "", "Saved"], [4, "plus", "GIMP-2.0"], [4, "plus", "ICQ6.5"], [4, "plus", "Java"], [4, "plus", "JDownloader"]
    ];
    document.getElementById("treeList").innerHTML = tree.map(([depth, box, name]) => {
        const pad = depth === 5 ? 118 : (depth === 4 ? 84 : 65);
        const toggle = box ? `<span class="expander ${box}"></span>` : "";
        return `<div class="tree-row" style="padding-left:${pad}px">${toggle}<svg width="16" height="15" viewBox="0 0 18 16"><use href="#i-folder"/></svg><span class="ms-1">${name}</span></div>`;
    }).join("");

    const files = ["2009-05-23 16-01-39-42", "2009-05-23 16-10-37-50", "2009-05-23 16-14-48-34", "2009-05-23 19-32-57-73",
        "2009-05-23 21-58-39-84", "2009-05-23 22-06-41-20", "2009-05-25 20-20-16-92", "2009-05-25 20-24-36-10",
        "2009-05-25 20-28-44-09", "2009-05-25 20-35-33-51", "2009-05-25 20-39-32-90", "2009-05-25 21-10-34-56",
        "2009-05-25 21-14-39-43", "2009-05-25 21-18-53-45"];
    document.getElementById("fileList").innerHTML = files.map(f =>
        `<div class="file-row"><svg width="18" height="18"><use href="#i-media"/></svg><span>Wow ${f}</span></div>`).join("");

    document.getElementById("scaleCol").innerHTML = [6, 12, 18, 24, 30, 36, 42, 48, 54].map(n => `<span>${n}</span>`).join("");

    const tabs = ["Explorer", "Trimmer", "Media Pool", "Transitions", "Video FX", "Media Generators"];
    document.getElementById("tabBand").innerHTML = tabs.map((t, i) =>
        `<div class="app-tab${i === 0 ? " active" : ""}${i === tabs.length - 1 ? " tail" : ""}">${t}</div>`).join("");
</script>
<script src="https://cdn.jsdelivr.net/npm/bootstrap@5.3.0/dist/js/bootstrap.bundle.min.js"></script>
</body>
</html>
